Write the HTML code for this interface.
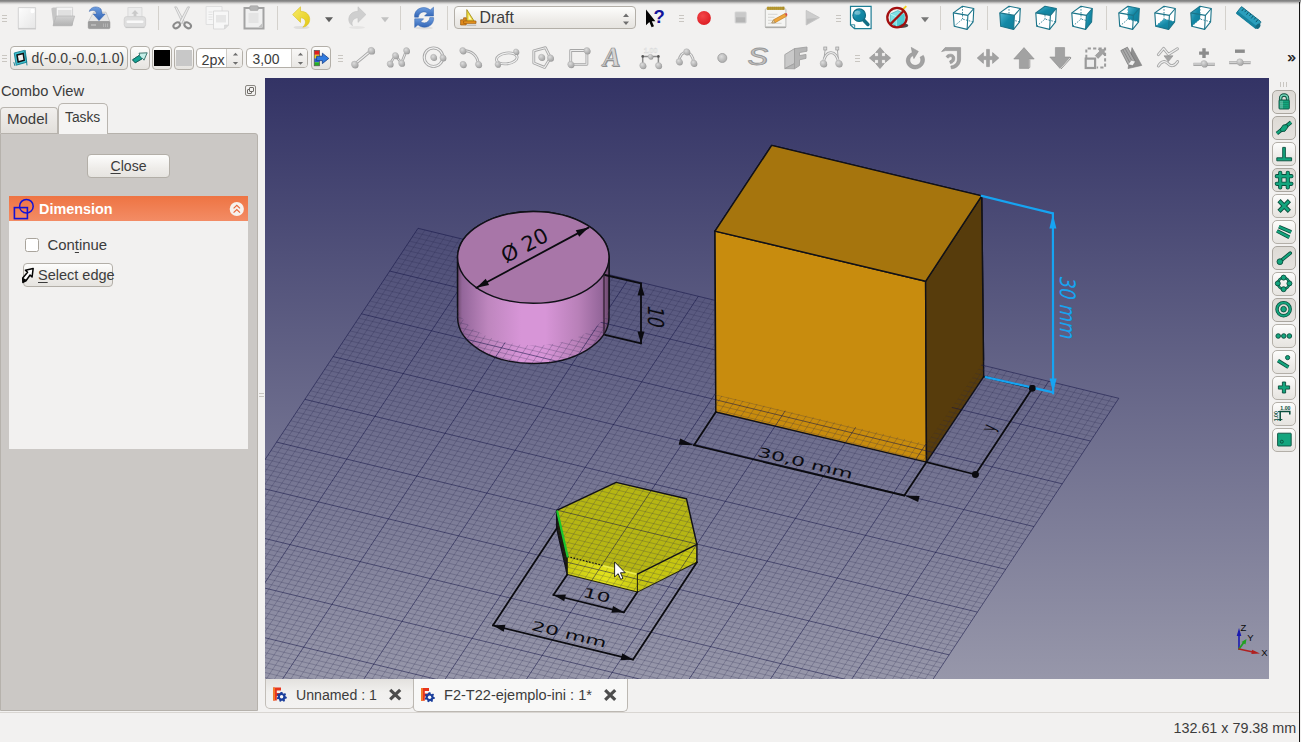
<!DOCTYPE html>
<html><head><meta charset="utf-8"><title>FreeCAD</title>
<style>
html,body{margin:0;padding:0}
body{width:1301px;height:742px;position:relative;overflow:hidden;background:#f2f1f0;font-family:"Liberation Sans",sans-serif;color:#3c3c3c;font-size:14.5px;line-height:1}
.a{position:absolute}
.t{position:absolute;white-space:pre;line-height:1}
svg{position:absolute;overflow:visible}

.sep{position:absolute;width:1px;background:#d4d1cc;top:6px;height:24px}
.hdl{position:absolute;width:5px;height:1px;background:#c9c6c1;box-shadow:0 3px 0 #c9c6c1,0 6px 0 #c9c6c1}
.btn{position:absolute;box-sizing:border-box;border:1px solid #b3afa8;border-radius:4px;background:linear-gradient(#fdfdfc,#eeece9 60%,#e6e4e0)}
.btn.chk{background:linear-gradient(#dddad5,#e6e3df);border-color:#aaa69f}
.spin{position:absolute;box-sizing:border-box;border:1px solid #b3afa8;border-radius:4px;background:#fff;overflow:hidden}
.spin i{position:absolute;right:0;top:0;bottom:0;width:15px;background:linear-gradient(#f8f7f6,#e9e7e4);border-left:1px solid #cfccc7}
.u{text-decoration:underline;text-underline-offset:2px;text-decoration-thickness:1px}

</style></head><body>
<div class="a" style="left:0;top:0;width:1301px;height:5px;background:linear-gradient(#7e7e7e,#8a8a8a 25%,#c4c3c2 55%,#e6e5e4 80%,#f2f1f0)"></div>
<div class="a" style="left:1298.7px;top:2px;width:1.4px;height:740px;background:#141414"></div>
<div class="sep" style="left:158px"></div>
<div class="sep" style="left:277px"></div>
<div class="sep" style="left:400px"></div>
<div class="sep" style="left:447px"></div>
<div class="sep" style="left:940px"></div>
<div class="sep" style="left:987px"></div>
<div class="sep" style="left:1106px"></div>
<div class="sep" style="left:1225px"></div>
<div class="hdl" style="left:2px;top:15px"></div>
<div class="hdl" style="left:679px;top:15px"></div>
<div class="hdl" style="left:836px;top:15px"></div>
<div class="hdl" style="left:2px;top:55px"></div>
<div class="hdl" style="left:338px;top:55px"></div>
<div class="hdl" style="left:854.5px;top:55px"></div>
<div class="btn" style="left:454px;top:6px;width:182px;height:23px;border-radius:4px"></div>
<div class="t" style="left:479.5px;top:9.5px;font-size:15.9px">Draft</div>
<div class="btn" style="left:10px;top:46px;width:118px;height:24px"></div>
<div class="t" style="left:31.5px;top:50.5px;font-size:14px">d(-0.0,-0.0,1.0)</div>
<div class="btn" style="left:130px;top:46px;width:20px;height:24px"></div>
<div class="btn" style="left:152px;top:46px;width:20px;height:24px"></div><div class="a" style="left:154px;top:50px;width:16px;height:16px;background:#000"></div>
<div class="btn" style="left:174px;top:46px;width:20px;height:24px"></div><div class="a" style="left:176px;top:50px;width:16px;height:16px;background:#c8c8c8"></div>
<div class="spin" style="left:196px;top:48px;width:47px;height:20px"><i></i></div><div class="t" style="left:201.5px;top:52.8px;font-size:14.3px">2px</div>
<div class="spin" style="left:246px;top:48px;width:62px;height:20px"><i></i></div><div class="t" style="left:252.5px;top:52.8px;font-size:13.9px">3,00</div>
<div class="btn" style="left:311px;top:46px;width:20px;height:24px"></div>
<div class="t" style="left:1287.5px;top:49px;font-size:15px;color:#111;font-weight:normal;-webkit-text-stroke:0.4px #111">»</div>
<div class="t" style="left:1px;top:83.5px;font-size:14.7px">Combo View</div>
<div class="a" style="left:245px;top:85px;width:11px;height:11px;box-sizing:border-box;border:1px solid #8a8782;border-radius:2px"></div><div class="a" style="left:247px;top:89px;width:5px;height:5px;box-sizing:border-box;border:1px solid #6e6b66;border-radius:1px;background:#f2f1f0"></div><div class="a" style="left:249px;top:87px;width:5px;height:5px;box-sizing:border-box;border:1px solid #6e6b66;border-radius:1px;background:#f2f1f0"></div>
<div class="a" style="left:0;top:133px;width:258px;height:578px;box-sizing:border-box;background:#cbc8c5;border:1px solid #b6b2ac;border-radius:0 3px 0 0"></div>
<div class="a" style="left:0;top:107px;width:58px;height:26px;box-sizing:border-box;border:1px solid #b9b5af;border-bottom:none;border-radius:4px 4px 0 0;background:linear-gradient(#f1efed,#e2dfdb)"></div>
<div class="a" style="left:58px;top:103px;width:50px;height:31px;box-sizing:border-box;border:1px solid #b9b5af;border-bottom:none;border-radius:5px 5px 0 0;background:#f5f4f3"></div>
<div class="t" style="left:7px;top:110.5px;font-size:15px">Model</div>
<div class="t" style="left:65px;top:111.2px;font-size:13.8px">Tasks</div>
<div class="btn" style="left:87px;top:154px;width:83px;height:24px"></div>
<div class="t" style="left:110.5px;top:159px;font-size:14.1px"><span class="u">C</span>lose</div>
<div class="a" style="left:9px;top:196px;width:239px;height:253px;background:#f2f1f0"></div>
<div class="a" style="left:9px;top:196px;width:239px;height:25px;background:linear-gradient(#ee7443,#f38c65)"></div>
<div class="t" style="left:39px;top:201.5px;font-size:14.4px;font-weight:bold;color:#fff">Dimension</div>
<div class="a" style="left:25px;top:238px;width:14px;height:14px;box-sizing:border-box;border:1px solid #a9a49c;border-radius:2.5px;background:#fff"></div>
<div class="t" style="left:47.5px;top:238px;font-size:14.9px">Con<span class="u">t</span>inue</div>
<div class="btn" style="left:23px;top:263px;width:90px;height:24px"></div>
<div class="t" style="left:38px;top:267.5px;font-size:14.5px"><span class="u">S</span>elect edge</div>
<div class="a" style="left:259px;top:393px;width:5px;height:1px;background:#c9c6c1;box-shadow:0 3px 0 #c9c6c1"></div>
<div class="a" style="left:1280px;top:82px;width:1px;height:5px;background:#c9c6c1;box-shadow:3px 0 0 #c9c6c1,6px 0 0 #c9c6c1"></div>
<div class="btn chk" style="left:1272px;top:90px;width:24px;height:24px;border-radius:5px"></div>
<div class="btn chk" style="left:1272px;top:116px;width:24px;height:24px;border-radius:5px"></div>
<div class="btn" style="left:1272px;top:142px;width:24px;height:24px;border-radius:5px"></div>
<div class="btn chk" style="left:1272px;top:168px;width:24px;height:24px;border-radius:5px"></div>
<div class="btn" style="left:1272px;top:194px;width:24px;height:24px;border-radius:5px"></div>
<div class="btn" style="left:1272px;top:220px;width:24px;height:24px;border-radius:5px"></div>
<div class="btn chk" style="left:1272px;top:246px;width:24px;height:24px;border-radius:5px"></div>
<div class="btn" style="left:1272px;top:272px;width:24px;height:24px;border-radius:5px"></div>
<div class="btn chk" style="left:1272px;top:298px;width:24px;height:24px;border-radius:5px"></div>
<div class="btn" style="left:1272px;top:324px;width:24px;height:24px;border-radius:5px"></div>
<div class="btn" style="left:1272px;top:350px;width:24px;height:24px;border-radius:5px"></div>
<div class="btn" style="left:1272px;top:376px;width:24px;height:24px;border-radius:5px"></div>
<div class="btn" style="left:1272px;top:402px;width:24px;height:24px;border-radius:5px"></div>
<div class="btn" style="left:1272px;top:428px;width:24px;height:24px;border-radius:5px"></div>
<div class="a" style="left:265px;top:679px;width:149px;height:30px;box-sizing:border-box;border:1px solid #c2beb8;border-top:none;border-radius:0 0 5px 5px;background:linear-gradient(#e3e1de,#f1f0ee 45%,#f3f2f1)"></div>
<div class="a" style="left:413px;top:679px;width:215px;height:33px;box-sizing:border-box;border:1px solid #bcb8b2;border-top:none;border-radius:0 0 5px 5px;background:#f8f8f7"></div>
<div class="t" style="left:296px;top:687.8px;font-size:14.15px">Unnamed : 1</div>
<div class="t" style="left:444px;top:688px;font-size:14.55px">F2-T22-ejemplo-ini : 1*</div>
<div class="a" style="left:0;top:712px;width:1299px;height:1px;background:#d9d6d2"></div>
<div class="t" style="left:1173.5px;top:721px;font-size:14.33px">132.61 x 79.38 mm</div>
<svg id="scene" class="a" style="left:0;top:0" width="1301" height="742" viewBox="0 0 1301 742">
<defs>
<linearGradient id="bg" x1="0" y1="0" x2="0" y2="1"><stop offset="0" stop-color="#333365"/><stop offset="1" stop-color="#9797aa"/></linearGradient>
<clipPath id="vp"><rect x="265" y="78" width="1004" height="601"/></clipPath>
<linearGradient id="cyl" x1="0" y1="0" x2="1" y2="0">
<stop offset="0" stop-color="#6e4a6e"/><stop offset="0.03" stop-color="#93669a"/><stop offset="0.2" stop-color="#be86be"/>
<stop offset="0.42" stop-color="#d795d7"/><stop offset="0.58" stop-color="#d795d7"/><stop offset="0.8" stop-color="#b880b8"/>
<stop offset="0.95" stop-color="#94669a"/><stop offset="1" stop-color="#6a466a"/></linearGradient>
<linearGradient id="hexf" x1="0" y1="0" x2="1" y2="0">
<stop offset="0" stop-color="#c9c914"/><stop offset="0.55" stop-color="#e2e21c"/><stop offset="1" stop-color="#cdcd14"/></linearGradient>

</defs>
<g clip-path="url(#vp)">
<rect x="265" y="78" width="1004" height="601" fill="url(#bg)"/>
<polygon points="715,231.1 925.6,281.3 926.5,462.1 715.8,412" fill="#c88c0e" stroke="#111118" stroke-width="1.45" stroke-linejoin="round" stroke-linecap="round"/><polygon points="925.6,281.3 981.7,195.9 983.7,376.6 926.5,462.1" fill="#573c0c" stroke="#111118" stroke-width="1.45" stroke-linejoin="round" stroke-linecap="round"/><polygon points="771.7,145.4 981.7,195.9 925.6,281.3 715,231.1" fill="#a6750d" stroke="#111118" stroke-width="1.45" stroke-linejoin="round" stroke-linecap="round"/>
<path d="M457.6,257.3 L457.6,317.6 A75.7,45.9 0 0 0 609,317.6 L609,257.3 Z" fill="url(#cyl)" stroke="#111118" stroke-width="1.45" stroke-linejoin="round" stroke-linecap="round"/><line x1="604" y1="275.5" x2="604" y2="334" stroke="#2a1a2a" stroke-width="1.2"/><ellipse cx="533.3" cy="257.3" rx="75.7" ry="45.9" fill="#a876a8" stroke="#111118" stroke-width="1.45" stroke-linejoin="round" stroke-linecap="round"/>
<polygon points="556.7,510.4 567.3,556.5 567.3,574.5 556.7,528.4" fill="#1e1e0c" stroke="#111118" stroke-width="1.45" stroke-linejoin="round" stroke-linecap="round"/><polygon points="567.3,556.5 637.4,574.1 637.4,592.1 567.3,574.5" fill="url(#hexf)"/><polygon points="637.4,574.1 696.9,544.3 696.9,562.3 637.4,592.1" fill="#c6c612"/><polygon points="556.7,510.4 616.1,482.4 686.5,498.8 696.9,544.3 637.4,574.1 567.3,556.5" fill="#b6b614"/>
<g><path d="M425.01,230 L142.21,657.6M415.17,232.58 L1115.97,402.58M432.02,231.7 L149.22,659.3M412.34,236.85 L1113.14,406.85M439.02,233.4 L156.22,661M409.52,241.13 L1110.32,411.13M446.03,235.1 L163.23,662.7M406.69,245.4 L1107.49,415.4M453.04,236.8 L170.24,664.4M403.86,249.68 L1104.66,419.68M460.05,238.5 L177.25,666.1M401.03,253.96 L1101.83,423.96M467.06,240.2 L184.26,667.8M398.2,258.23 L1099,428.23M474.06,241.9 L191.26,669.5M395.38,262.51 L1096.18,432.51M481.07,243.6 L198.27,671.2M392.55,266.78 L1093.35,436.78M495.09,247 L212.29,674.6M386.89,275.34 L1087.69,445.34M502.1,248.7 L219.3,676.3M384.06,279.61 L1084.86,449.61M509.1,250.4 L226.3,678M381.24,283.89 L1082.04,453.89M516.11,252.1 L233.31,679.7M378.41,288.16 L1079.21,458.16M523.12,253.8 L240.32,681.4M375.58,292.44 L1076.38,462.44M530.13,255.5 L247.33,683.1M372.75,296.72 L1073.55,466.72M537.14,257.2 L254.34,684.8M369.92,300.99 L1070.72,470.99M544.14,258.9 L261.34,686.5M367.1,305.27 L1067.9,475.27M551.15,260.6 L268.35,688.2M364.27,309.54 L1065.07,479.54M565.17,264 L282.37,691.6M358.61,318.1 L1059.41,488.1M572.18,265.7 L289.38,693.3M355.78,322.37 L1056.58,492.37M579.18,267.4 L296.38,695M352.96,326.65 L1053.76,496.65M586.19,269.1 L303.39,696.7M350.13,330.92 L1050.93,500.92M593.2,270.8 L310.4,698.4M347.3,335.2 L1048.1,505.2M600.21,272.5 L317.41,700.1M344.47,339.48 L1045.27,509.48M607.22,274.2 L324.42,701.8M341.64,343.75 L1042.44,513.75M614.22,275.9 L331.42,703.5M338.82,348.03 L1039.62,518.03M621.23,277.6 L338.43,705.2M335.99,352.3 L1036.79,522.3M635.25,281 L352.45,708.6M330.33,360.86 L1031.13,530.86M642.26,282.7 L359.46,710.3M327.5,365.13 L1028.3,535.13M649.26,284.4 L366.46,712M324.68,369.41 L1025.48,539.41M656.27,286.1 L373.47,713.7M321.85,373.68 L1022.65,543.68M663.28,287.8 L380.48,715.4M319.02,377.96 L1019.82,547.96M670.29,289.5 L387.49,717.1M316.19,382.24 L1016.99,552.24M677.3,291.2 L394.5,718.8M313.36,386.51 L1014.16,556.51M684.3,292.9 L401.5,720.5M310.54,390.79 L1011.34,560.79M691.31,294.6 L408.51,722.2M307.71,395.06 L1008.51,565.06M705.33,298 L422.53,725.6M302.05,403.62 L1002.85,573.62M712.34,299.7 L429.54,727.3M299.22,407.89 L1000.02,577.89M719.34,301.4 L436.54,729M296.4,412.17 L997.2,582.17M726.35,303.1 L443.55,730.7M293.57,416.44 L994.37,586.44M733.36,304.8 L450.56,732.4M290.74,420.72 L991.54,590.72M740.37,306.5 L457.57,734.1M287.91,425 L988.71,595M747.38,308.2 L464.58,735.8M285.08,429.27 L985.88,599.27M754.38,309.9 L471.58,737.5M282.26,433.55 L983.06,603.55M761.39,311.6 L478.59,739.2M279.43,437.82 L980.23,607.82M775.41,315 L492.61,742.6M273.77,446.38 L974.57,616.38M782.42,316.7 L499.62,744.3M270.94,450.65 L971.74,620.65M789.42,318.4 L506.62,746M268.12,454.93 L968.92,624.93M796.43,320.1 L513.63,747.7M265.29,459.2 L966.09,629.2M803.44,321.8 L520.64,749.4M262.46,463.48 L963.26,633.48M810.45,323.5 L527.65,751.1M259.63,467.76 L960.43,637.76M817.46,325.2 L534.66,752.8M256.8,472.03 L957.6,642.03M824.46,326.9 L541.66,754.5M253.98,476.31 L954.78,646.31M831.47,328.6 L548.67,756.2M251.15,480.58 L951.95,650.58M845.49,332 L562.69,759.6M245.49,489.14 L946.29,659.14M852.5,333.7 L569.7,761.3M242.66,493.41 L943.46,663.41M859.5,335.4 L576.7,763M239.84,497.69 L940.64,667.69M866.51,337.1 L583.71,764.7M237.01,501.96 L937.81,671.96M873.52,338.8 L590.72,766.4M234.18,506.24 L934.98,676.24M880.53,340.5 L597.73,768.1M231.35,510.52 L932.15,680.52M887.54,342.2 L604.74,769.8M228.52,514.79 L929.32,684.79M894.54,343.9 L611.74,771.5M225.7,519.07 L926.5,689.07M901.55,345.6 L618.75,773.2M222.87,523.34 L923.67,693.34M915.57,349 L632.77,776.6M217.21,531.9 L918.01,701.9M922.58,350.7 L639.78,778.3M214.38,536.17 L915.18,706.17M929.58,352.4 L646.78,780M211.56,540.45 L912.36,710.45M936.59,354.1 L653.79,781.7M208.73,544.72 L909.53,714.72M943.6,355.8 L660.8,783.4M205.9,549 L906.7,719M950.61,357.5 L667.81,785.1M203.07,553.28 L903.87,723.28M957.62,359.2 L674.82,786.8M200.24,557.55 L901.04,727.55M964.62,360.9 L681.82,788.5M197.42,561.83 L898.22,731.83M971.63,362.6 L688.83,790.2M194.59,566.1 L895.39,736.1M985.65,366 L702.85,793.6M188.93,574.66 L889.73,744.66M992.66,367.7 L709.86,795.3M186.1,578.93 L886.9,748.93M999.66,369.4 L716.86,797M183.28,583.21 L884.08,753.21M1006.67,371.1 L723.87,798.7M180.45,587.48 L881.25,757.48M1013.68,372.8 L730.88,800.4M177.62,591.76 L878.42,761.76M1020.69,374.5 L737.89,802.1M174.79,596.04 L875.59,766.04M1027.7,376.2 L744.9,803.8M171.96,600.31 L872.76,770.31M1034.7,377.9 L751.9,805.5M169.14,604.59 L869.94,774.59M1041.71,379.6 L758.91,807.2M166.31,608.86 L867.11,778.86M1055.73,383 L772.93,810.6M160.65,617.42 L861.45,787.42M1062.74,384.7 L779.94,812.3M157.82,621.69 L858.62,791.69M1069.74,386.4 L786.94,814M155,625.97 L855.8,795.97M1076.75,388.1 L793.95,815.7M152.17,630.24 L852.97,800.24M1083.76,389.8 L800.96,817.4M149.34,634.52 L850.14,804.52M1090.77,391.5 L807.97,819.1M146.51,638.8 L847.31,808.8M1097.78,393.2 L814.98,820.8M143.68,643.07 L844.48,813.07M1104.78,394.9 L821.98,822.5M140.86,647.35 L841.66,817.35M1111.79,396.6 L828.99,824.2M138.03,651.62 L838.83,821.62" stroke="#24244c" stroke-opacity="0.27" stroke-width="0.9" fill="none"/><path d="M418,228.3 L135.2,655.9M418,228.3 L1118.8,398.3M488.08,245.3 L205.28,672.9M389.72,271.06 L1090.52,441.06M558.16,262.3 L275.36,689.9M361.44,313.82 L1062.24,483.82M628.24,279.3 L345.44,706.9M333.16,356.58 L1033.96,526.58M698.32,296.3 L415.52,723.9M304.88,399.34 L1005.68,569.34M768.4,313.3 L485.6,740.9M276.6,442.1 L977.4,612.1M838.48,330.3 L555.68,757.9M248.32,484.86 L949.12,654.86M908.56,347.3 L625.76,774.9M220.04,527.62 L920.84,697.62M978.64,364.3 L695.84,791.9M191.76,570.38 L892.56,740.38M1048.72,381.3 L765.92,808.9M163.48,613.14 L864.28,783.14M1118.8,398.3 L836,825.9M135.2,655.9 L836,825.9" stroke="#141446" stroke-opacity="0.55" stroke-width="1" fill="none"/></g>
<clipPath id="cubeA"><polygon points="769.7,143.4 983.7,193.9 985.7,358.6 926.5,444.1 713.8,394 713,231.1"/></clipPath><g clip-path="url(#cubeA)"><polygon points="715,231.1 925.6,281.3 926.5,462.1 715.8,412" fill="#c88c0e" stroke="#111118" stroke-width="1.45" stroke-linejoin="round" stroke-linecap="round"/><polygon points="925.6,281.3 981.7,195.9 983.7,376.6 926.5,462.1" fill="#573c0c" stroke="#111118" stroke-width="1.45" stroke-linejoin="round" stroke-linecap="round"/><polygon points="771.7,145.4 981.7,195.9 925.6,281.3 715,231.1" fill="#a6750d" stroke="#111118" stroke-width="1.45" stroke-linejoin="round" stroke-linecap="round"/></g>
<clipPath id="cylA"><path d="M455.6,257.3 A77.7,47.9 0 0 1 611,257.3 L611,299.6 A77.7,45.9 0 0 1 455.6,299.6 Z"/></clipPath><g clip-path="url(#cylA)"><path d="M457.6,257.3 L457.6,317.6 A75.7,45.9 0 0 0 609,317.6 L609,257.3 Z" fill="url(#cyl)" stroke="#111118" stroke-width="1.45" stroke-linejoin="round" stroke-linecap="round"/><line x1="604" y1="275.5" x2="604" y2="334" stroke="#2a1a2a" stroke-width="1.2"/><ellipse cx="533.3" cy="257.3" rx="75.7" ry="45.9" fill="#a876a8" stroke="#111118" stroke-width="1.45" stroke-linejoin="round" stroke-linecap="round"/></g>
<line x1="602.35" y1="565.6" x2="637.4" y2="574.4" stroke="#ecec4a" stroke-width="1.6"/>
<line x1="567.3" y1="556.5" x2="602.35" y2="565.3" stroke="#15150a" stroke-width="1.2" stroke-dasharray="1.6,1.6"/>
<polyline points="637.4,574.1 696.9,544.3" fill="none" stroke="#111118" stroke-width="1.45" stroke-linejoin="round" stroke-linecap="round"/><line x1="637.4" y1="574.1" x2="637.4" y2="592.1" stroke="#24240c" stroke-width="1.05" stroke-linecap="round" stroke-linejoin="round"/>
<polyline points="696.9,562.3 637.4,592.1 567.3,574.5" fill="none" stroke="#24240c" stroke-width="1.05" stroke-linecap="round" stroke-linejoin="round"/>
<polyline points="567.3,574.5 567.3,556.5" fill="none" stroke="#24240c" stroke-width="1.05" stroke-linecap="round" stroke-linejoin="round"/>
<polyline points="556.7,528.4 556.7,510.4 616.1,482.4 686.5,498.8 696.9,544.3 696.9,562.3" fill="none" stroke="#111118" stroke-width="1.45" stroke-linejoin="round" stroke-linecap="round"/>
<line x1="557.3" y1="511.4" x2="567.6" y2="556.5" stroke="#1dc52c" stroke-width="2.2" stroke-linecap="round"/>
<line x1="715.8" y1="412" x2="694" y2="445.2" stroke="#0b0b10" stroke-width="1.8" stroke-linecap="round" fill="none"/>
<line x1="926.5" y1="462.1" x2="904.3" y2="495.5" stroke="#0b0b10" stroke-width="1.8" stroke-linecap="round" fill="none"/>
<line x1="694" y1="445.2" x2="904.3" y2="495.5" stroke="#0b0b10" stroke-width="1.8" stroke-linecap="round" fill="none"/>
<polygon points="694,445.2 678.67,444.82 680.16,438.6" fill="#0b0b10"/>
<polygon points="904.3,495.5 919.63,495.88 918.14,502.1" fill="#0b0b10"/>
<line x1="926.5" y1="462.1" x2="975.4" y2="474.5" stroke="#0b0b10" stroke-width="1.8" stroke-linecap="round" fill="none"/>
<line x1="975.4" y1="474.5" x2="1032.3" y2="388.3" stroke="#0b0b10" stroke-width="1.8" stroke-linecap="round" fill="none"/>
<line x1="983.7" y1="376.6" x2="1032.3" y2="388.3" stroke="#0b0b10" stroke-width="1.8" stroke-linecap="round" fill="none"/>
<circle cx="975.4" cy="474.5" r="3.3" fill="#0b0b10"/><circle cx="1032.3" cy="388.3" r="3.3" fill="#0b0b10"/>
<line x1="981.7" y1="195.9" x2="1052.9" y2="213.4" stroke="#16a4f2" stroke-width="2.2" stroke-linecap="round" fill="none"/>
<line x1="1052.9" y1="213.4" x2="1053.1" y2="393.4" stroke="#16a4f2" stroke-width="2.2" stroke-linecap="round" fill="none"/>
<line x1="985.7" y1="377.1" x2="1053.1" y2="392.4" stroke="#16a4f2" stroke-width="2.2" stroke-linecap="round" fill="none"/>
<polygon points="1052.9,214.4 1056.4,228.4 1049.4,228.4" fill="#16a4f2"/>
<polygon points="1053.1,392.4 1049.6,378.4 1056.6,378.4" fill="#16a4f2"/>
<line x1="476.4" y1="287.8" x2="588.5" y2="227.6" stroke="#0b0b10" stroke-width="1.8" stroke-linecap="round" fill="none"/>
<polygon points="476.4,287.8 485.71,278.71 489.12,285.06" fill="#0b0b10"/>
<polygon points="588.5,227.6 579.19,236.69 575.78,230.34" fill="#0b0b10"/>
<line x1="605" y1="275" x2="641" y2="283.4" stroke="#0b0b10" stroke-width="1.8" stroke-linecap="round" fill="none"/>
<line x1="605" y1="334.9" x2="641" y2="343.4" stroke="#0b0b10" stroke-width="1.8" stroke-linecap="round" fill="none"/>
<line x1="641" y1="283.4" x2="641" y2="343.4" stroke="#0b0b10" stroke-width="1.8" stroke-linecap="round" fill="none"/>
<polygon points="641,283.4 644.5,295.4 637.5,295.4" fill="#0b0b10"/>
<polygon points="641,343.4 637.5,331.4 644.5,331.4" fill="#0b0b10"/>
<line x1="567.3" y1="574.5" x2="553.4" y2="595" stroke="#0b0b10" stroke-width="1.8" stroke-linecap="round" fill="none"/>
<line x1="637.4" y1="592.1" x2="623.9" y2="612.3" stroke="#0b0b10" stroke-width="1.8" stroke-linecap="round" fill="none"/>
<line x1="553.4" y1="595" x2="623.9" y2="612.3" stroke="#0b0b10" stroke-width="1.8" stroke-linecap="round" fill="none"/>
<polygon points="553.4,595 565.89,594.46 564.22,601.26" fill="#0b0b10"/>
<polygon points="623.9,612.3 611.41,612.84 613.08,606.04" fill="#0b0b10"/>
<line x1="556.7" y1="528.4" x2="492.9" y2="625.4" stroke="#0b0b10" stroke-width="1.8" stroke-linecap="round" fill="none"/>
<line x1="696.9" y1="562.3" x2="633.1" y2="659.6" stroke="#0b0b10" stroke-width="1.8" stroke-linecap="round" fill="none"/>
<line x1="492.9" y1="625.4" x2="633.1" y2="659.6" stroke="#0b0b10" stroke-width="1.8" stroke-linecap="round" fill="none"/>
<polygon points="492.9,625.4 505.39,624.86 503.72,631.66" fill="#0b0b10"/>
<polygon points="633.1,659.6 620.61,660.14 622.28,653.34" fill="#0b0b10"/>
<text transform="matrix(2.11,0.51,-0.38,1.28,756.5,456)" text-anchor="start" font-family="DejaVu Sans, sans-serif" font-size="10.0" fill="#0b0b10" >30,0 mm</text>
<text transform="matrix(2.11,0.51,-0.38,1.28,530.5,629.8)" text-anchor="start" font-family="DejaVu Sans, sans-serif" font-size="10.0" fill="#0b0b10" >20 mm</text>
<text transform="matrix(2.11,0.51,-0.38,1.28,582,596.6)" text-anchor="start" font-family="DejaVu Sans, sans-serif" font-size="10.0" fill="#0b0b10" >10</text>
<text transform="matrix(1.85,-0.99,0.99,1.85,506,263.6)" text-anchor="start" font-family="DejaVu Sans, sans-serif" font-size="10.0" fill="#0b0b10" >Ø 20</text>
<text transform="matrix(0,1.66,-2.19,-0.53,648.2,304.5)" text-anchor="start" font-family="DejaVu Sans, sans-serif" font-size="10.0" fill="#0b0b10" >10</text>
<text transform="matrix(0,1.77,-2.14,-0.52,1059.5,275.2)" text-anchor="start" font-family="DejaVu Sans, sans-serif" font-size="10.0" fill="#16a4f2" >30 mm</text>
<text transform="matrix(0.4,-0.99,1.87,0.43,994.1,432.2)" text-anchor="start" font-family="DejaVu Sans, sans-serif" font-size="10.0" fill="#0b0b10" >y</text>
<circle cx="975.4" cy="474.5" r="3.3" fill="#0b0b10"/><circle cx="1032.3" cy="388.3" r="3.3" fill="#0b0b10"/>
<g stroke-linecap="round"><line x1="1239" y1="649" x2="1239" y2="633" stroke="#1a1ab0" stroke-width="1.6"/><polygon points="1239,628 1236.7,636 1241.3,636" fill="#1a1ab0"/><line x1="1239" y1="649" x2="1244.5" y2="641.5" stroke="#22a022" stroke-width="1.8"/><polygon points="1246.5,639 1241.5,642 1245.5,644.5" fill="#22a022"/><line x1="1239" y1="649" x2="1254" y2="652.3" stroke="#b02020" stroke-width="1.6"/><polygon points="1260,653.5 1252,649.8 1251.4,654" fill="#b02020"/></g>
<text x="1243.5" y="630.5" font-family="Liberation Sans, sans-serif" font-size="9.5" fill="#0a0a0a" text-anchor="middle">Z</text>
<text x="1250.5" y="640.5" font-family="Liberation Sans, sans-serif" font-size="9.5" fill="#0a0a0a" text-anchor="middle">Y</text>
<text x="1264.5" y="655.5" font-family="Liberation Sans, sans-serif" font-size="9.5" fill="#0a0a0a" text-anchor="middle">X</text>
<path transform="translate(614.6,561.9) scale(0.89)" d="M0,0 L0,17 L4,13.2 L6.8,19.6 L9.4,18.5 L6.6,12.2 L12,12.2 Z" fill="#fff" stroke="#111" stroke-width="1"/>
</g>
</svg>
<svg class="a" style="left:0;top:0;pointer-events:none" width="1301" height="742" viewBox="0 0 1301 742"><defs>
<linearGradient id="gPaper" x1="0" y1="0" x2="1" y2="1"><stop offset="0" stop-color="#fdfdfd"/><stop offset="1" stop-color="#e6e6e6"/></linearGradient>
<linearGradient id="gGrey" x1="0" y1="0" x2="0" y2="1"><stop offset="0" stop-color="#d2d2d2"/><stop offset="1" stop-color="#b2b2b2"/></linearGradient>
<linearGradient id="gGreyD" x1="0" y1="0" x2="0" y2="1"><stop offset="0" stop-color="#b9b9b9"/><stop offset="1" stop-color="#989898"/></linearGradient>
<linearGradient id="gBlue" x1="0" y1="0" x2="0" y2="1"><stop offset="0" stop-color="#6f9fe0"/><stop offset="1" stop-color="#2f62b4"/></linearGradient>
<linearGradient id="gYel" x1="0" y1="0" x2="1" y2="1"><stop offset="0" stop-color="#f8ec6a"/><stop offset="1" stop-color="#e3c811"/></linearGradient>
<linearGradient id="gTeal" x1="0" y1="0" x2="1" y2="1"><stop offset="0" stop-color="#4fb7d2"/><stop offset="0.5" stop-color="#1489a6"/><stop offset="1" stop-color="#0f7d99"/></linearGradient>
<radialGradient id="gRed" cx="0.4" cy="0.35" r="0.7"><stop offset="0" stop-color="#f4474a"/><stop offset="1" stop-color="#dc1c22"/></radialGradient>
<radialGradient id="gBall" cx="0.4" cy="0.35" r="0.7"><stop offset="0" stop-color="#dcdcdc"/><stop offset="1" stop-color="#a9a9a9"/></radialGradient>
<linearGradient id="gSnap" x1="0" y1="0" x2="0" y2="1"><stop offset="0" stop-color="#1fb58c"/><stop offset="1" stop-color="#0f9a74"/></linearGradient>
</defs>
<g transform="translate(12,5)"><path d="M6.3,2.6 H23.6 V23.4 H6.3 Z" fill="url(#gPaper)" stroke="#d3d3d3" stroke-width="1"/><path d="M6,23.9 H24" stroke="#c4c4c4" stroke-width="1"/><circle cx="20.5" cy="6" r="2.2" fill="#fff"/></g>
<g transform="translate(48,5)"><path d="M3.3,3.5 L5,2.5 L10,2.5 L11,4 L25,4 L25,20.5 L5.5,20.5 Z" fill="#c6c6c6"/><path d="M8.5,2.3 H24.6 V17 H8.5 Z" fill="#f4f4f4" stroke="#cfcfcf" stroke-width="0.7"/><path d="M10,5 H23.5 V12 H10 Z" fill="#e0e0e0"/><path d="M8.2,11 H26.7 L23.8,20.8 H5 Z" fill="url(#gGrey)" stroke="#b0b0b0" stroke-width="0.6"/></g>
<g transform="translate(88,5)"><path d="M5.6,7.2 H18 L21.9,16.8 H0.3 Z" fill="#e6e6e6" stroke="#bdbdbd" stroke-width="0.7"/><rect x="0.3" y="16.6" width="21.6" height="7" rx="1" fill="#9b9b9b" stroke="#8a8a8a" stroke-width="0.6"/><path d="M3,20 H8" stroke="#c8c8c8" stroke-width="1.2"/><path d="M15.5,18.5V22M17.5,18.5V22M19.5,18.5V22" stroke="#b5b5b5" stroke-width="0.9"/><path d="M1.3,6.4 C2.5,1.5 9.5,0.5 13,4 L14.2,9 L17.2,9 L11,15.6 L5.2,9 L8.6,9 C8.3,5.5 5,4.3 1.3,6.4 Z" fill="url(#gBlue)" stroke="#2c5aa8" stroke-width="0.5"/></g>
<g transform="translate(123,5)"><path d="M4.9,2.5 H19 V13 H4.9 Z" fill="#ececec" stroke="#d2d2d2" stroke-width="0.7"/><path d="M12,5 L15.5,8.8 H13.4 V11.5 H10.6 V8.8 H8.5 Z" fill="#c9c9c9"/><rect x="1.2" y="11.6" width="21.4" height="10.6" rx="2.5" fill="#dedede" stroke="#cdcdcd" stroke-width="0.7"/><rect x="3.5" y="15.4" width="17" height="2.6" rx="1.2" fill="#f9f9f9"/><path d="M2.5,22.6H21.5" stroke="#c6c6c6" stroke-width="1"/></g>
<g transform="translate(170,5)"><path d="M4.7,1.9 L6.6,1.9 L14.8,17.5 L12.6,18.5 Z" fill="#ececec" stroke="#b5b5b5" stroke-width="0.7"/><path d="M19.5,1.9 L17.6,1.9 L9.4,17.5 L11.6,18.5 Z" fill="#ececec" stroke="#b5b5b5" stroke-width="0.7"/><ellipse cx="6.7" cy="20.3" rx="3.6" ry="2.5" transform="rotate(-35 6.7 20.3)" fill="none" stroke="#8b8b8b" stroke-width="2"/><ellipse cx="17.7" cy="20.3" rx="3.6" ry="2.5" transform="rotate(35 17.7 20.3)" fill="none" stroke="#8b8b8b" stroke-width="2"/></g>
<g transform="translate(205.5,5)"><path d="M0.6,1.5 H16.5 V19.5 H0.6 Z" fill="#f6f6f6" stroke="#dadada" stroke-width="0.8"/><path d="M3,7H7M3,9.5H7M3,12H7M3,14.5H7" stroke="#e0e0e0" stroke-width="0.8"/><path d="M8,6 H23 V20 L19,24 H8 Z" fill="#f7f7f7" stroke="#d4d4d4" stroke-width="0.8"/><path d="M10.5,10 H20.5 V17.5 H10.5 Z" fill="#e6e6e6"/><path d="M23,20 L19,20 L19,24 Z" fill="#dcdcdc" stroke="#cfcfcf" stroke-width="0.5"/></g>
<g transform="translate(241.5,5)"><rect x="3" y="3" width="19" height="20.5" fill="#f0f0f0" stroke="#a3a3a3" stroke-width="2"/><rect x="8.3" y="0.8" width="8.4" height="4.6" rx="1" fill="#b4b4b4" stroke="#a0a0a0" stroke-width="0.6"/><path d="M7,8 H17 V18 H7 Z" fill="#e4e4e4"/><path d="M20.5,18.5 V22 H17 Z" fill="#c2c2c2"/></g>
<g transform="translate(289,5)"><ellipse cx="12.5" cy="22.5" rx="8" ry="1.6" fill="#000" opacity="0.08"/><path d="M3.6,9.6 L11.5,1.8 L11.5,6.3 C17.5,6.3 21.4,10.5 20.6,15.6 C20,19.6 17,21.8 13.8,22.2 C16.5,19.8 17,16.8 15.8,14.8 C14.8,13.2 13,12.8 11.5,12.8 L11.5,17.4 Z" fill="url(#gYel)" stroke="#d9be20" stroke-width="0.6"/></g>
<g transform="translate(345.5,5)"><ellipse cx="11.5" cy="22.5" rx="8" ry="1.4" fill="#000" opacity="0.05"/><path d="M20.4,9.6 L12.5,1.8 L12.5,6.3 C6.5,6.3 2.6,10.5 3.4,15.6 C3.8,18 5.2,19.8 7,20.6 C5.9,18.5 6.6,15.8 8.2,14.4 C9.4,13.3 11,12.8 12.5,12.8 L12.5,17.4 Z" fill="#cfcfcf" stroke="#c2c2c2" stroke-width="0.6"/></g>
<g transform="translate(412,5)"><ellipse cx="12" cy="23" rx="9" ry="1.5" fill="#000" opacity="0.08"/><path d="M2.6,12.2 C2,6.5 6.5,2.4 12,2.6 C14.6,2.7 16.6,3.6 18.2,5 L21.5,2.2 L21.5,11 L12.6,11 L15.4,8 C14.3,7.2 13.2,6.9 11.9,6.9 C9,6.9 6.6,9 6.4,12.2 Z" fill="url(#gBlue)" stroke="#2f60ad" stroke-width="0.5"/><path d="M21.6,12.6 C22.2,18.3 17.7,22.4 12.2,22.2 C9.6,22.1 7.6,21.2 6,19.8 L2.7,22.6 L2.7,13.8 L11.6,13.8 L8.8,16.8 C9.9,17.6 11,17.9 12.3,17.9 C15.2,17.9 17.6,15.8 17.8,12.6 Z" fill="url(#gBlue)" stroke="#2f60ad" stroke-width="0.5"/></g>
<g transform="translate(643,5)"><path d="M3,4.6 L3,20.2 L6.4,17 L8.6,22.2 L11,21.2 L8.8,16.2 L12.4,16.2 Z" fill="#050505"/><text x="10.6" y="18.2" font-family="Liberation Sans, sans-serif" font-weight="bold" font-size="18.5" fill="#14149a">?</text></g>
<g transform="translate(692,5.5)"><circle cx="12" cy="12.5" r="6.9" fill="url(#gRed)"/></g>
<g transform="translate(728.5,5.3)"><rect x="6.5" y="6.6" width="11.2" height="11.2" rx="0.8" fill="#c9c9c9" stroke="#d6d6d6" stroke-width="0.8"/><rect x="7.5" y="12" width="9.2" height="5" fill="#b5b5b5"/></g>
<g transform="translate(763.5,5.3)"><rect x="1.8" y="3.4" width="20.6" height="19" rx="1" fill="#f5f5f3" stroke="#b9b9b6" stroke-width="0.9"/><path d="M1.8,21.2 H22.4 V22.6 H1.8 Z" fill="#a9a9a6"/><path d="M3.3,1.6 H21 V4.6 H3.3 Z" fill="#c8a93a"/><path d="M4.6,1.2V4.6M6.6,1.2V4.6M8.6,1.2V4.6M10.6,1.2V4.6M12.6,1.2V4.6M14.6,1.2V4.6M16.6,1.2V4.6M18.6,1.2V4.6M20.2,1.2V4.6" stroke="#8e7420" stroke-width="0.7"/><path d="M4.5,9H14M4.5,12H11M4.5,15H9M4.5,18H18" stroke="#d2d2cf" stroke-width="0.9"/><path d="M8.3,17.6 L10,14.5 L21.4,8.3 L23,11 L11.6,17.4 Z" fill="#f0a63c" stroke="#b77716" stroke-width="0.6"/><path d="M21.4,8.3 L23,7.6 L24,9.6 L23,11 Z" fill="#d64a4a"/><path d="M8.3,17.6 L10,14.5 L11.6,17.4 Z" fill="#e8d0a8" stroke="#7a6a4a" stroke-width="0.4"/></g>
<g transform="translate(800,5.2)"><path d="M6.2,5.2 L19.4,12.4 L6.2,19.8 Z" fill="#cdcdcd" stroke="#c0c0c0" stroke-width="0.8"/><path d="M6.8,13.5 L17.5,12.8 L6.8,19 Z" fill="#bcbcbc"/></g>
<g transform="translate(848.5,5)"><path d="M2,1.4 H22.6 V23.6 H6 L2,20 Z" fill="#fff" stroke="#1d7d93" stroke-width="1.2"/><path d="M2.2,19.8 H6.2 V23.4" fill="none" stroke="#1d7d93" stroke-width="0.9"/><path d="M14.6,14.6 L19.4,19.4" stroke="#136d84" stroke-width="3.6" stroke-linecap="round"/><circle cx="10.7" cy="10.2" r="6.3" fill="url(#gTeal)" stroke="#136d84" stroke-width="1.2"/><ellipse cx="9" cy="7.8" rx="3" ry="2" fill="#fff" opacity="0.35"/></g>
<g transform="translate(884.8,5)"><ellipse cx="16" cy="20.5" rx="7.5" ry="2.6" fill="#222" opacity="0.8"/><path d="M5.5,9 L13,5.6 L19.5,8.4 L19.5,17.6 L12,21.4 L5.5,18 Z" fill="#7fe0e4" stroke="#3aa9b2" stroke-width="0.6"/><path d="M5.5,9 L12,11.8 L19.5,8.4 M12,11.8 V21.4" stroke="#c9f6f6" stroke-width="0.8" fill="none"/><path d="M12,11.8 L19.5,8.4 V17.6 L12,21.4 Z" fill="#3fc3cc" opacity="0.75"/><path d="M17,5.5 L21.5,1.2" stroke="#f2d21c" stroke-width="1.8"/><circle cx="12.2" cy="12.6" r="9.7" fill="none" stroke="#a30f0f" stroke-width="2.3"/><path d="M5.4,19.4 L19,5.8" stroke="#a30f0f" stroke-width="2.3"/></g>
<g transform="translate(952,5)"><polygon points="1.3,7.9 10.5,1.2 21.8,3.5 21.1,16.8 15.1,24.4 2.2,21.2" fill="#fff"/><path d="M10.5,1.2 L10.5,14.1 M2.2,21.2 L10.5,14.1 L21.1,16.8" stroke="#2a7d92" stroke-width="0.9" stroke-dasharray="1.6,1.3" fill="none"/><polygon points="1.3,7.9 10.5,1.2 21.8,3.5 21.1,16.8 15.1,24.4 2.2,21.2" fill="none" stroke="#1b7489" stroke-width="1.1" stroke-linejoin="round"/><path d="M1.3,7.9 L15.9,10.4 L21.8,3.5 M15.9,10.4 L15.1,24.4" stroke="#1b7489" stroke-width="1.1" fill="none" stroke-linejoin="round"/></g>
<g transform="translate(998.5,5)"><polygon points="1.3,7.9 10.5,1.2 21.8,3.5 21.1,16.8 15.1,24.4 2.2,21.2" fill="#fff"/><path d="M10.5,1.2 L10.5,14.1 M2.2,21.2 L10.5,14.1 L21.1,16.8" stroke="#2a7d92" stroke-width="0.9" stroke-dasharray="1.6,1.3" fill="none"/><polygon points="1.3,7.9 15.9,10.4 15.1,24.4 2.2,21.2" fill="url(#gTeal)"/><polygon points="1.3,7.9 10.5,1.2 21.8,3.5 21.1,16.8 15.1,24.4 2.2,21.2" fill="none" stroke="#1b7489" stroke-width="1.1" stroke-linejoin="round"/><path d="M1.3,7.9 L15.9,10.4 L21.8,3.5 M15.9,10.4 L15.1,24.4" stroke="#1b7489" stroke-width="1.1" fill="none" stroke-linejoin="round"/></g>
<g transform="translate(1034.5,5)"><polygon points="1.3,7.9 10.5,1.2 21.8,3.5 21.1,16.8 15.1,24.4 2.2,21.2" fill="#fff"/><path d="M10.5,1.2 L10.5,14.1 M2.2,21.2 L10.5,14.1 L21.1,16.8" stroke="#2a7d92" stroke-width="0.9" stroke-dasharray="1.6,1.3" fill="none"/><polygon points="1.3,7.9 10.5,1.2 21.8,3.5 15.9,10.4" fill="url(#gTeal)"/><polygon points="1.3,7.9 10.5,1.2 21.8,3.5 21.1,16.8 15.1,24.4 2.2,21.2" fill="none" stroke="#1b7489" stroke-width="1.1" stroke-linejoin="round"/><path d="M1.3,7.9 L15.9,10.4 L21.8,3.5 M15.9,10.4 L15.1,24.4" stroke="#1b7489" stroke-width="1.1" fill="none" stroke-linejoin="round"/></g>
<g transform="translate(1070.5,5)"><polygon points="1.3,7.9 10.5,1.2 21.8,3.5 21.1,16.8 15.1,24.4 2.2,21.2" fill="#fff"/><path d="M10.5,1.2 L10.5,14.1 M2.2,21.2 L10.5,14.1 L21.1,16.8" stroke="#2a7d92" stroke-width="0.9" stroke-dasharray="1.6,1.3" fill="none"/><polygon points="15.9,10.4 21.8,3.5 21.1,16.8 15.1,24.4" fill="url(#gTeal)"/><polygon points="1.3,7.9 10.5,1.2 21.8,3.5 21.1,16.8 15.1,24.4 2.2,21.2" fill="none" stroke="#1b7489" stroke-width="1.1" stroke-linejoin="round"/><path d="M1.3,7.9 L15.9,10.4 L21.8,3.5 M15.9,10.4 L15.1,24.4" stroke="#1b7489" stroke-width="1.1" fill="none" stroke-linejoin="round"/></g>
<g transform="translate(1117.5,5)"><polygon points="1.3,7.9 10.5,1.2 21.8,3.5 21.1,16.8 15.1,24.4 2.2,21.2" fill="#fff"/><path d="M10.5,1.2 L10.5,14.1 M2.2,21.2 L10.5,14.1 L21.1,16.8" stroke="#2a7d92" stroke-width="0.9" stroke-dasharray="1.6,1.3" fill="none"/><polygon points="10.5,1.2 21.8,3.5 21.1,16.8 10.5,14.1" fill="url(#gTeal)"/><polygon points="1.3,7.9 10.5,1.2 21.8,3.5 21.1,16.8 15.1,24.4 2.2,21.2" fill="none" stroke="#1b7489" stroke-width="1.1" stroke-linejoin="round"/><path d="M1.3,7.9 L15.9,10.4 L21.8,3.5 M15.9,10.4 L15.1,24.4" stroke="#1b7489" stroke-width="1.1" fill="none" stroke-linejoin="round"/></g>
<g transform="translate(1153.5,5)"><polygon points="1.3,7.9 10.5,1.2 21.8,3.5 21.1,16.8 15.1,24.4 2.2,21.2" fill="#fff"/><path d="M10.5,1.2 L10.5,14.1 M2.2,21.2 L10.5,14.1 L21.1,16.8" stroke="#2a7d92" stroke-width="0.9" stroke-dasharray="1.6,1.3" fill="none"/><polygon points="2.2,21.2 15.1,24.4 21.1,16.8 10.5,14.1" fill="url(#gTeal)"/><polygon points="1.3,7.9 10.5,1.2 21.8,3.5 21.1,16.8 15.1,24.4 2.2,21.2" fill="none" stroke="#1b7489" stroke-width="1.1" stroke-linejoin="round"/><path d="M1.3,7.9 L15.9,10.4 L21.8,3.5 M15.9,10.4 L15.1,24.4" stroke="#1b7489" stroke-width="1.1" fill="none" stroke-linejoin="round"/></g>
<g transform="translate(1189.5,5)"><polygon points="1.3,7.9 10.5,1.2 21.8,3.5 21.1,16.8 15.1,24.4 2.2,21.2" fill="#fff"/><path d="M10.5,1.2 L10.5,14.1 M2.2,21.2 L10.5,14.1 L21.1,16.8" stroke="#2a7d92" stroke-width="0.9" stroke-dasharray="1.6,1.3" fill="none"/><polygon points="1.3,7.9 10.5,1.2 10.5,14.1 2.2,21.2" fill="url(#gTeal)"/><polygon points="1.3,7.9 10.5,1.2 21.8,3.5 21.1,16.8 15.1,24.4 2.2,21.2" fill="none" stroke="#1b7489" stroke-width="1.1" stroke-linejoin="round"/><path d="M1.3,7.9 L15.9,10.4 L21.8,3.5 M15.9,10.4 L15.1,24.4" stroke="#1b7489" stroke-width="1.1" fill="none" stroke-linejoin="round"/></g>
<g transform="translate(1237,6)"><g transform="rotate(38 12 12)"><rect x="-1" y="7.6" width="25" height="8.2" rx="0.8" fill="#2a9fbd" stroke="#146b82" stroke-width="0.9"/><rect x="-1" y="13.6" width="25" height="3" fill="#17839f"/><path d="M2,7.8V11M5,7.8V10M8,7.8V11M11,7.8V10M14,7.8V11M17,7.8V10M20,7.8V11" stroke="#0d566a" stroke-width="0.9"/></g><ellipse cx="21" cy="20.2" rx="2" ry="3" fill="#146b82" transform="rotate(38 21 20.2)"/></g>
<path d="M325,17.200000000000003 H333 L329,22.200000000000003 Z" fill="#5f5f5f"/>
<path d="M381,17.200000000000003 H389 L385,22.200000000000003 Z" fill="#c2c2c2"/>
<path d="M921,17.200000000000003 H929 L925,22.200000000000003 Z" fill="#777777"/>
<path d="M623,17 L626,13.6 L629,17 Z M623,21.6 L629,21.6 L626,25 Z" fill="#6e6e6e"/>
<path d="M232.9,55.6 L235.5,52.8 L238.1,55.6 Z M232.9,62 L238.1,62 L235.5,64.8 Z" fill="#6e6e6e"/>
<path d="M297.9,55.6 L300.5,52.8 L303.1,55.6 Z M297.9,62 L303.1,62 L300.5,64.8 Z" fill="#6e6e6e"/>
<g transform="translate(351,46)"><path d="M3.6,18.3 L20.2,4.5" fill="none" stroke="#a6a6a6" stroke-width="3.0" stroke-linecap="round" stroke-linejoin="round"/><path d="M3.6,18.3 L20.2,4.5" fill="none" stroke="#ededed" stroke-width="1.3" stroke-linecap="round" stroke-linejoin="round"/><circle cx="4.3" cy="19.2" r="3.2" fill="#9c9c9c"/><circle cx="3.6" cy="18.3" r="3.2" fill="url(#gBall)" stroke="#b4b4b4" stroke-width="0.5"/><circle cx="20.9" cy="5.4" r="3.2" fill="#9c9c9c"/><circle cx="20.2" cy="4.5" r="3.2" fill="url(#gBall)" stroke="#b4b4b4" stroke-width="0.5"/></g>
<g transform="translate(387,46)"><path d="M3,17.8 L8.3,9.4 L14.5,17 L19.4,4.5" fill="none" stroke="#a6a6a6" stroke-width="2.6" stroke-linecap="round" stroke-linejoin="round"/><path d="M3,17.8 L8.3,9.4 L14.5,17 L19.4,4.5" fill="none" stroke="#ededed" stroke-width="0.9000000000000001" stroke-linecap="round" stroke-linejoin="round"/><circle cx="3.7" cy="18.7" r="2.9" fill="#9c9c9c"/><circle cx="3" cy="17.8" r="2.9" fill="url(#gBall)" stroke="#b4b4b4" stroke-width="0.5"/><circle cx="9.0" cy="10.3" r="2.9" fill="#9c9c9c"/><circle cx="8.3" cy="9.4" r="2.9" fill="url(#gBall)" stroke="#b4b4b4" stroke-width="0.5"/><circle cx="15.2" cy="17.9" r="2.9" fill="#9c9c9c"/><circle cx="14.5" cy="17" r="2.9" fill="url(#gBall)" stroke="#b4b4b4" stroke-width="0.5"/><circle cx="20.099999999999998" cy="5.4" r="2.9" fill="#9c9c9c"/><circle cx="19.4" cy="4.5" r="2.9" fill="url(#gBall)" stroke="#b4b4b4" stroke-width="0.5"/></g>
<g transform="translate(423,46)"><circle cx="10.5" cy="11.2" r="9.3" fill="none" stroke="#a6a6a6" stroke-width="3"/><circle cx="10.5" cy="11.2" r="9.3" fill="none" stroke="#f0f0f0" stroke-width="1.4"/><circle cx="11.2" cy="12.1" r="2.9" fill="#9c9c9c"/><circle cx="10.5" cy="11.2" r="2.9" fill="url(#gBall)" stroke="#b4b4b4" stroke-width="0.5"/><circle cx="20.5" cy="12.5" r="2.9" fill="#9c9c9c"/><circle cx="19.8" cy="11.6" r="2.9" fill="url(#gBall)" stroke="#b4b4b4" stroke-width="0.5"/></g>
<g transform="translate(459,46)"><path d="M3.7,4.5 C12,4.5 18.5,9 19.4,18.3" fill="none" stroke="#a6a6a6" stroke-width="2.8" stroke-linecap="round" stroke-linejoin="round"/><path d="M3.7,4.5 C12,4.5 18.5,9 19.4,18.3" fill="none" stroke="#ededed" stroke-width="1.0999999999999999" stroke-linecap="round" stroke-linejoin="round"/><circle cx="4.4" cy="5.4" r="3" fill="#9c9c9c"/><circle cx="3.7" cy="4.5" r="3" fill="url(#gBall)" stroke="#b4b4b4" stroke-width="0.5"/><circle cx="4.7" cy="19.2" r="3" fill="#9c9c9c"/><circle cx="4" cy="18.3" r="3" fill="url(#gBall)" stroke="#b4b4b4" stroke-width="0.5"/><circle cx="20.099999999999998" cy="19.2" r="3" fill="#9c9c9c"/><circle cx="19.4" cy="18.3" r="3" fill="url(#gBall)" stroke="#b4b4b4" stroke-width="0.5"/></g>
<g transform="translate(495,46)"><g transform="rotate(-8 11.8 12.4)"><ellipse cx="11.8" cy="12.4" rx="10.4" ry="5.4" fill="none" stroke="#a6a6a6" stroke-width="2.8"/><ellipse cx="11.8" cy="12.4" rx="10.4" ry="5.4" fill="none" stroke="#f0f0f0" stroke-width="1.2"/></g><circle cx="21.7" cy="6.4" r="2.6" fill="#9c9c9c"/><circle cx="21" cy="5.5" r="2.6" fill="url(#gBall)" stroke="#b4b4b4" stroke-width="0.5"/><circle cx="3.3" cy="19.2" r="2.6" fill="#9c9c9c"/><circle cx="2.6" cy="18.3" r="2.6" fill="url(#gBall)" stroke="#b4b4b4" stroke-width="0.5"/></g>
<g transform="translate(531,46)"><path d="M2.8,4.8 L14.4,1.7 L19.5,11.8 L13.6,21.4 L2.8,17 Z" fill="none" stroke="#a6a6a6" stroke-width="2.8" stroke-linecap="round" stroke-linejoin="round"/><path d="M2.8,4.8 L14.4,1.7 L19.5,11.8 L13.6,21.4 L2.8,17 Z" fill="none" stroke="#ededed" stroke-width="1.0999999999999999" stroke-linecap="round" stroke-linejoin="round"/><circle cx="11.2" cy="12.1" r="3" fill="#9c9c9c"/><circle cx="10.5" cy="11.2" r="3" fill="url(#gBall)" stroke="#b4b4b4" stroke-width="0.5"/><circle cx="20.0" cy="12.700000000000001" r="3" fill="#9c9c9c"/><circle cx="19.3" cy="11.8" r="3" fill="url(#gBall)" stroke="#b4b4b4" stroke-width="0.5"/></g>
<g transform="translate(567,46)"><path d="M3.7,4.5 H19.9 V18.3 H3.7 Z" fill="none" stroke="#a6a6a6" stroke-width="2.8" stroke-linecap="round" stroke-linejoin="round"/><path d="M3.7,4.5 H19.9 V18.3 H3.7 Z" fill="none" stroke="#ededed" stroke-width="1.0999999999999999" stroke-linecap="round" stroke-linejoin="round"/><circle cx="20.599999999999998" cy="5.4" r="3" fill="#9c9c9c"/><circle cx="19.9" cy="4.5" r="3" fill="url(#gBall)" stroke="#b4b4b4" stroke-width="0.5"/><circle cx="4.4" cy="19.2" r="3" fill="#9c9c9c"/><circle cx="3.7" cy="18.3" r="3" fill="url(#gBall)" stroke="#b4b4b4" stroke-width="0.5"/></g>
<g transform="translate(603,46)"><text x="0.4" y="21" font-family="Liberation Serif, serif" font-weight="bold" font-style="italic" font-size="26.5" fill="#8e8e8e">A</text><text x="-0.3" y="20.4" font-family="Liberation Serif, serif" font-weight="bold" font-style="italic" font-size="26.5" fill="#d6d6d6" stroke="#909090" stroke-width="0.7">A</text></g>
<g transform="translate(639,46)"><path d="M3.7,19 V10.4 M19.4,19 V10.4 M3.7,10.4 H19.4" fill="none" stroke="#8a8a8a" stroke-width="1.5"/><circle cx="3.7" cy="10.4" r="1.3" fill="#555"/><circle cx="19.4" cy="10.4" r="1.3" fill="#555"/><text x="11.5" y="7" font-family="Liberation Sans, sans-serif" font-weight="bold" font-size="7" fill="#fbfbfb" stroke="#d5d5d5" stroke-width="0.4" text-anchor="middle">1.00</text><circle cx="12.1" cy="11.5" r="2.3" fill="#9c9c9c"/><circle cx="11.4" cy="10.6" r="2.3" fill="url(#gBall)" stroke="#b4b4b4" stroke-width="0.5"/><circle cx="4.4" cy="20.299999999999997" r="3" fill="#9c9c9c"/><circle cx="3.7" cy="19.4" r="3" fill="url(#gBall)" stroke="#b4b4b4" stroke-width="0.5"/><circle cx="20.099999999999998" cy="20.299999999999997" r="3" fill="#9c9c9c"/><circle cx="19.4" cy="19.4" r="3" fill="url(#gBall)" stroke="#b4b4b4" stroke-width="0.5"/></g>
<g transform="translate(675,46)"><path d="M4.1,15.5 C4.5,3 18,3 18.7,17" fill="none" stroke="#a6a6a6" stroke-width="2.8" stroke-linecap="round" stroke-linejoin="round"/><path d="M4.1,15.5 C4.5,3 18,3 18.7,17" fill="none" stroke="#ededed" stroke-width="1.0999999999999999" stroke-linecap="round" stroke-linejoin="round"/><circle cx="4.8" cy="16.4" r="3" fill="#9c9c9c"/><circle cx="4.1" cy="15.5" r="3" fill="url(#gBall)" stroke="#b4b4b4" stroke-width="0.5"/><circle cx="12.299999999999999" cy="6.6000000000000005" r="3" fill="#9c9c9c"/><circle cx="11.6" cy="5.7" r="3" fill="url(#gBall)" stroke="#b4b4b4" stroke-width="0.5"/><circle cx="19.4" cy="17.9" r="3" fill="#9c9c9c"/><circle cx="18.7" cy="17" r="3" fill="url(#gBall)" stroke="#b4b4b4" stroke-width="0.5"/></g>
<g transform="translate(710,46)"><circle cx="12.3" cy="12" r="4.5" fill="url(#gBall)" stroke="#a2a2a2" stroke-width="0.9"/></g>
<g transform="translate(746.5,46)"><text x="1.5" y="21.3" font-family="Liberation Sans, sans-serif" font-weight="normal" font-style="italic" font-size="26" fill="#8e8e8e" transform="scale(1.18,0.9)">S</text><text x="0.9" y="20.7" font-family="Liberation Sans, sans-serif" font-weight="normal" font-style="italic" font-size="26" fill="#c2c2c2" stroke="#9a9a9a" stroke-width="0.9" transform="scale(1.18,0.9)">S</text></g>
<g transform="translate(783,46)"><path d="M1.8,8.6 L11.5,2.6 L11.5,17.6 L1.8,22.6 Z" fill="#c9c9c9" stroke="#9d9d9d" stroke-width="0.8"/><path d="M11.5,2.6 L24,1 L24,5.2 L16.5,6.6 L16.5,9.6 L23,8.4 L23,12.4 L16.5,13.8 L16.5,19.6 L11.5,22.8 L1.8,22.6 L11.5,17.6 Z" fill="#b5b5b5" stroke="#9d9d9d" stroke-width="0.8"/><path d="M11.5,17.6 L11.5,22.8" stroke="#9d9d9d" stroke-width="0.8"/></g>
<g transform="translate(818,46)"><path d="M5.3,17.4 L7.3,2.5 M20.7,17.4 L19.3,2.5" stroke="#a9a9a9" stroke-width="1"/><path d="M5.3,17.4 C6.5,3 19.5,3 20.7,17.4" fill="none" stroke="#a6a6a6" stroke-width="2.8" stroke-linecap="round" stroke-linejoin="round"/><path d="M5.3,17.4 C6.5,3 19.5,3 20.7,17.4" fill="none" stroke="#ededed" stroke-width="1.0999999999999999" stroke-linecap="round" stroke-linejoin="round"/><rect x="5.8" y="1" width="3" height="3" fill="#d9d9d9" stroke="#999" stroke-width="0.7"/><rect x="17.8" y="1" width="3" height="3" fill="#d9d9d9" stroke="#999" stroke-width="0.7"/><circle cx="6.0" cy="18.299999999999997" r="3.2" fill="#9c9c9c"/><circle cx="5.3" cy="17.4" r="3.2" fill="url(#gBall)" stroke="#b4b4b4" stroke-width="0.5"/><circle cx="21.4" cy="18.299999999999997" r="3.2" fill="#9c9c9c"/><circle cx="20.7" cy="17.4" r="3.2" fill="url(#gBall)" stroke="#b4b4b4" stroke-width="0.5"/></g>
<g transform="translate(868,46)"><path d="M12,1.4 L16.4,6.6 H13.6 V10.4 H17.4 V7.6 L22.6,12 L17.4,16.4 V13.6 H13.6 V17.4 H16.4 L12,22.6 L7.6,17.4 H10.4 V13.6 H6.6 V16.4 L1.4,12 L6.6,7.6 V10.4 H10.4 V6.6 H7.6 Z" fill="#a2a2a2" stroke="#8f8f8f" stroke-width="0.6" stroke-linejoin="round"/></g>
<g transform="translate(903.7,46)"><path d="M8.6,6.6 C3.4,8.6 1.2,14 3.6,18.4 C6,22.8 11.8,24.2 16.2,21.6 C20.6,19 22,13.6 19.6,9.4 L16.4,11.2 C17.8,13.8 17,17 14.4,18.6 C11.6,20.2 8.2,19.2 6.8,16.6 C5.4,14 6.4,10.8 9.4,9.6 L10.2,12.6 L14.6,5.4 L7.6,1.4 Z" fill="#a2a2a2" stroke="#8f8f8f" stroke-width="0.6" stroke-linejoin="round"/></g>
<g transform="translate(940,46)"><path d="M1.6,5.6 L5.2,1.6 H20.6 V13 C20.6,18.6 16.8,22.4 11.4,22.8 L10.8,20 C15,19.4 17.4,16.8 17.4,13 V4.6 H5.6 Z" fill="#a2a2a2" stroke="#8f8f8f" stroke-width="0.6" stroke-linejoin="round"/><path d="M6,10.4 C8,7.4 13.6,7.2 14.6,11 C15.4,14.2 13.6,17 10.4,17.6 L9.6,15 C11.6,14.4 12.4,13 12,11.6 C11.4,10 9,10.4 8.2,12.2 Z" fill="#a2a2a2" stroke="#8f8f8f" stroke-width="0.6" stroke-linejoin="round"/></g>
<g transform="translate(976,46)"><path d="M1.2,12 L7.4,6.6 V10.4 H10.6 V3.4 H13.4 V10.4 H16.6 V6.6 L22.8,12 L16.6,17.4 V13.6 H13.4 V20.6 H10.6 V13.6 H7.4 V17.4 Z" fill="#a2a2a2" stroke="#8f8f8f" stroke-width="0.6" stroke-linejoin="round"/></g>
<g transform="translate(1012,46)"><path d="M12,1.6 L22.2,13 H16.6 V22.4 H7.4 V13 H1.8 Z" fill="#a2a2a2" stroke="#8f8f8f" stroke-width="0.6" stroke-linejoin="round"/><path d="M16.6,22.4 L17.8,21.4 V13.4 M7.4,22.4" stroke="#8a8a8a" stroke-width="0.8" fill="none"/></g>
<g transform="translate(1048,46)"><path d="M12,22.4 L22.2,11 H16.6 V1.6 H7.4 V11 H1.8 Z" fill="#a2a2a2" stroke="#8f8f8f" stroke-width="0.6" stroke-linejoin="round"/><path d="M22.2,11 L23,12 L13,23" stroke="#8a8a8a" stroke-width="0.9" fill="none"/></g>
<g transform="translate(1083.7,46)"><path d="M2.6,12 V2.6 H21.4 V21.4 H13" fill="none" stroke="#9c9c9c" stroke-width="2" stroke-dasharray="3.2,2.2"/><rect x="2" y="12.6" width="9.4" height="9.4" fill="#ededed" stroke="#9a9a9a" stroke-width="2.2"/><path d="M11.6,9.6 L16.2,5 L14.6,3.4 L20.6,3.4 L20.6,9.4 L19,7.8 L14.4,12.4 Z" fill="#a2a2a2" stroke="#8f8f8f" stroke-width="0.6" stroke-linejoin="round"/></g>
<g transform="translate(1119.4,46)"><path d="M12.6,1.6 L22.4,19.4 L8.6,22.6 Z" fill="#8e8e8e" stroke="#7e7e7e" stroke-width="0.6"/><path d="M1.4,4.6 L8,1.2 L16,15.4 L13.4,19.6 L8.6,18.6 Z" fill="#a9a9a9" stroke="#6f6f6f" stroke-width="0.7"/><path d="M3.4,3.6 L11,17.6 M5.6,2.4 L13.4,16.4" stroke="#7a7a7a" stroke-width="0.7"/><path d="M8.6,18.6 L13.4,19.6 L16,15.4 L12,14.2 Z" fill="#f1f1f1" stroke="#8a8a8a" stroke-width="0.5"/></g>
<g transform="translate(1156,46)"><path d="M2.4,8.6 L7.6,2.4 L12.4,8.4 L21.4,2.8" fill="none" stroke="#a6a6a6" stroke-width="3.0" stroke-linecap="round" stroke-linejoin="round"/><path d="M2.4,8.6 L7.6,2.4 L12.4,8.4 L21.4,2.8" fill="none" stroke="#ededed" stroke-width="1.3" stroke-linecap="round" stroke-linejoin="round"/><path d="M2.4,20 C5.6,14.6 9.4,14.6 12,17.6 C14.8,20.8 18.6,20.4 21.6,15.6" fill="none" stroke="#a6a6a6" stroke-width="3.0" stroke-linecap="round" stroke-linejoin="round"/><path d="M2.4,20 C5.6,14.6 9.4,14.6 12,17.6 C14.8,20.8 18.6,20.4 21.6,15.6" fill="none" stroke="#ededed" stroke-width="1.3" stroke-linecap="round" stroke-linejoin="round"/><path d="M8,9.8 H17 L12.4,15.6 Z" fill="#a2a2a2" stroke="#8f8f8f" stroke-width="0.6" stroke-linejoin="round"/></g>
<g transform="translate(1192.2,46)"><path d="M1.2,18.4 H22.6" stroke="#a6a6a6" stroke-width="3.2"/><path d="M1.4,18 H22.4" stroke="#dedede" stroke-width="1.2"/><circle cx="12.5" cy="18.5" r="3.1" fill="#9c9c9c"/><circle cx="11.8" cy="17.6" r="3.1" fill="url(#gBall)" stroke="#b4b4b4" stroke-width="0.5"/><path d="M11.8,2.2 V12 M6.9,7.1 H16.7" stroke="#8c8c8c" stroke-width="3.4"/></g>
<g transform="translate(1228,46)"><path d="M1.2,16.6 H22.6" stroke="#a6a6a6" stroke-width="3.2"/><path d="M1.4,16.2 H22.4" stroke="#dedede" stroke-width="1.2"/><circle cx="12.5" cy="16.7" r="3.1" fill="#9c9c9c"/><circle cx="11.8" cy="15.8" r="3.1" fill="url(#gBall)" stroke="#b4b4b4" stroke-width="0.5"/><path d="M7,5.2 H16.8" stroke="#8c8c8c" stroke-width="3.4"/></g>
<g transform="translate(1272,90)"><path d="M8.6,10.4 V8.4 C8.6,3.8 15.6,3.8 15.6,8.4 V10.4" fill="none" stroke="#0a4d3c" stroke-width="3.4"/><path d="M8.6,10.4 V8.4 C8.6,3.8 15.6,3.8 15.6,8.4 V10.4" fill="none" stroke="#6fd0b4" stroke-width="1.6"/><rect x="7" y="10" width="10.3" height="9" rx="0.8" fill="#14a57e" stroke="#0a4d3c" stroke-width="0.9"/><path d="M7.6,12.4H16.8M7.6,14.6H16.8M7.6,16.8H16.8" stroke="#0f8563" stroke-width="0.8"/><path d="M7.8,10.8 H11 V18.4 H7.8Z" fill="#fff" opacity="0.25"/></g>
<g transform="translate(1272,116)"><path d="M4.9,17.4 L19,6.3" fill="none" stroke="#0a4d3c" stroke-width="3.8" stroke-linecap="butt" stroke-linejoin="miter"/><path d="M4.9,17.4 L19,6.3" fill="none" stroke="#14a57e" stroke-width="2.2" stroke-linecap="butt" stroke-linejoin="miter"/><path d="M8.2,13.2 L11.2,9 L15,8.6 L16,11 L13,15.2 L9.2,15.6 Z" fill="#14a57e" stroke="#0a4d3c" stroke-width="0.9" stroke-linejoin="round"/></g>
<g transform="translate(1272,142)"><path d="M10.7,5.4 H13.4 V15.8 H19.6 V18.8 H4.8 V15.8 H10.7 Z" fill="#14a57e" stroke="#0a4d3c" stroke-width="0.9"/></g>
<g transform="translate(1272,168)"><path d="M8.2,4.8V19.4M15.8,4.8V19.4M4.8,8.2H19.4M4.8,15.8H19.4" stroke="#0a4d3c" stroke-width="4.2" stroke-linecap="round"/><path d="M8.2,4.8V19.4M15.8,4.8V19.4M4.8,8.2H19.4M4.8,15.8H19.4" stroke="#14a57e" stroke-width="2.6" stroke-linecap="round"/></g>
<g transform="translate(1272,194)"><path d="M7,6.6 L17.4,17.4 M17.4,6.6 L7,17.4" stroke="#0a4d3c" stroke-width="4.4" stroke-linecap="butt"/><path d="M7.5,7.1 L16.9,16.9 M16.9,7.1 L7.5,16.9" stroke="#14a57e" stroke-width="2.8" stroke-linecap="butt"/></g>
<g transform="translate(1272,220)"><path d="M6.9,6.8 L19.2,11.9" fill="none" stroke="#0a4d3c" stroke-width="3.8" stroke-linecap="butt" stroke-linejoin="miter"/><path d="M6.9,6.8 L19.2,11.9" fill="none" stroke="#14a57e" stroke-width="2.2" stroke-linecap="butt" stroke-linejoin="miter"/><path d="M5,10.9 L17.3,17.2" fill="none" stroke="#0a4d3c" stroke-width="3.8" stroke-linecap="butt" stroke-linejoin="miter"/><path d="M5,10.9 L17.3,17.2" fill="none" stroke="#14a57e" stroke-width="2.2" stroke-linecap="butt" stroke-linejoin="miter"/></g>
<g transform="translate(1272,246)"><path d="M8.4,15.2 L18.2,7.2" fill="none" stroke="#0a4d3c" stroke-width="3.5999999999999996" stroke-linecap="round" stroke-linejoin="miter"/><path d="M8.4,15.2 L18.2,7.2" fill="none" stroke="#14a57e" stroke-width="2.0" stroke-linecap="round" stroke-linejoin="miter"/><circle cx="7.9" cy="15.7" r="2.9" fill="#14a57e" stroke="#0a4d3c" stroke-width="0.9"/></g>
<g transform="translate(1272,272)"><circle cx="11.6" cy="11.4" r="5.6" fill="none" stroke="#0a4d3c" stroke-width="2.6"/><circle cx="11.6" cy="11.4" r="5.6" fill="none" stroke="#14a57e" stroke-width="1.2"/><circle cx="11.6" cy="5.6" r="2.5" fill="#14a57e" stroke="#0a4d3c" stroke-width="0.9"/><circle cx="17.4" cy="11.4" r="2.5" fill="#14a57e" stroke="#0a4d3c" stroke-width="0.9"/><circle cx="11.6" cy="17.2" r="2.5" fill="#14a57e" stroke="#0a4d3c" stroke-width="0.9"/><circle cx="5.8" cy="11.4" r="2.5" fill="#14a57e" stroke="#0a4d3c" stroke-width="0.9"/></g>
<g transform="translate(1272,298)"><circle cx="11.6" cy="11.2" r="6.6" fill="none" stroke="#0a4d3c" stroke-width="3.4"/><circle cx="11.6" cy="11.2" r="6.6" fill="none" stroke="#14a57e" stroke-width="1.9"/><circle cx="11.6" cy="11.2" r="2.8" fill="#14a57e" stroke="#0a4d3c" stroke-width="0.9"/></g>
<g transform="translate(1272,324)"><circle cx="6.2" cy="12" r="2.3" fill="#14a57e" stroke="#0a4d3c" stroke-width="0.9"/><circle cx="11.8" cy="12" r="2.3" fill="#14a57e" stroke="#0a4d3c" stroke-width="0.9"/><circle cx="17.4" cy="12" r="2.3" fill="#14a57e" stroke="#0a4d3c" stroke-width="0.9"/></g>
<g transform="translate(1272,350)"><path d="M6,10.6 L16.4,17.2" fill="none" stroke="#0a4d3c" stroke-width="3.8" stroke-linecap="butt" stroke-linejoin="miter"/><path d="M6,10.6 L16.4,17.2" fill="none" stroke="#14a57e" stroke-width="2.2" stroke-linecap="butt" stroke-linejoin="miter"/><circle cx="15.6" cy="7.6" r="2.1" fill="#14a57e" stroke="#0a4d3c" stroke-width="0.9"/></g>
<g transform="translate(1272,376)"><path d="M10.4,6 H13.6 V9.9 H17.6 V13.1 H13.6 V17 H10.4 V13.1 H6.4 V9.9 H10.4 Z" fill="#14a57e" stroke="#0a4d3c" stroke-width="0.9"/></g>
<g transform="translate(1272,402)"><path d="M8.2,19 V9.6 H17.8 V12.4" fill="none" stroke="#0a4d3c" stroke-width="1.5"/><path d="M6,17.6H10.4 M8.2,9.6 H6" stroke="#0a4d3c" stroke-width="1"/><text x="13.4" y="7.6" font-family="Liberation Sans, sans-serif" font-weight="bold" font-size="5.2" fill="#0a4d3c" text-anchor="middle">1.00</text><text transform="translate(6.4,14.2) rotate(-90)" font-family="Liberation Sans, sans-serif" font-weight="bold" font-size="5.2" fill="#0a4d3c" text-anchor="middle">1.00</text></g>
<g transform="translate(1272,428)"><rect x="5.6" y="5.2" width="13.6" height="12.8" rx="0.6" fill="#14a57e" stroke="#0a4d3c" stroke-width="0.9"/><circle cx="9.8" cy="13.7" r="1.5" fill="none" stroke="#0a4d3c" stroke-width="0.9"/></g>
<g transform="translate(459.6,8.6)"><path d="M7.2,1 L14.6,12.6 H7.2 Z" fill="#f1dd3c" stroke="#9a8514" stroke-width="0.8"/><path d="M9,6 V10.8 H12 Z" fill="#fbf6c8"/><path d="M1,11.2 H4 V9.2 H6.6 V16.4 H1 Z" fill="#e08a1e" stroke="#9c5a0c" stroke-width="0.7"/><path d="M4,12.4 H16.4 V14.8 H4 Z" fill="#e9961f" stroke="#9c5a0c" stroke-width="0.7"/><path d="M7,16.6 H16.6" stroke="#8c8c8c" stroke-width="0.6"/></g>
<g transform="translate(13.6,49.6)"><path d="M0.6,3.4 L10.8,0.8 L13.2,12.6 L2.6,15.6 Z" fill="#3fc0cf" stroke="#137f8e" stroke-width="0.9"/><path d="M3.4,5.4 L9.6,3.8 L10.6,10.6 L4.6,12.4 Z" fill="#f2f1f0" stroke="#111" stroke-width="1.5"/><path d="M11.6,0.4 L13.4,15.8 M0.2,12.6 L1.4,16.4" stroke="#137f8e" stroke-width="0.9"/></g>
<g transform="translate(131.6,49.6)"><path d="M1,10.2 L8.2,5.4 L7.4,3.6 L15.6,3.2 L12.4,10.6 L11,8.8 L3.6,13.2 Z" fill="#c4efe8" stroke="#2d6a62" stroke-width="0.9" stroke-linejoin="round"/><path d="M1,10.2 L7.6,5.8 L10.4,9.2 L3.6,13.2 Z" fill="#16a394" stroke="#0f5f58" stroke-width="0.9" stroke-linejoin="round"/></g>
<g transform="translate(313.4,49.6)"><rect x="0.8" y="0.8" width="5.4" height="4.4" fill="#e02020"/><rect x="0.8" y="5.2" width="5.4" height="3.6" fill="#f0d21a"/><rect x="0.8" y="8.8" width="5.4" height="3.8" fill="#2a5fd0"/><rect x="0.8" y="12.6" width="5.4" height="3.6" fill="#25b025"/><rect x="0.8" y="0.8" width="5.4" height="15.4" fill="none" stroke="#555" stroke-width="0.7"/><path d="M3.2,6.6 H9 V3.6 L15.4,8.8 L9,14 V11 H3.2 Z" fill="#2f7be0" stroke="#143f8c" stroke-width="0.8" stroke-linejoin="round"/></g>
<g transform="translate(13.6,199)"><rect x="0.8" y="8.6" width="13" height="11" fill="none" stroke="#1313d6" stroke-width="1.6"/><circle cx="12.8" cy="7.2" r="6.8" fill="none" stroke="#1313d6" stroke-width="1.5"/></g>
<g transform="translate(229.6,201.8)"><circle cx="7.2" cy="7.2" r="7.1" fill="#f6f2ee"/><path d="M4,6.6 L7.2,3.6 L10.4,6.6 M4,10.8 L7.2,7.8 L10.4,10.8" fill="none" stroke="#e8673a" stroke-width="1.2"/></g>
<g transform="translate(21.4,266.6)"><g transform="translate(0.6,1.2) scale(0.9)"><path d="M12.4,0.8 L3.8,2.6 L6.2,5 L0.8,11.2 L1,16.2 L4.4,14.4 L9,8 L11.2,10.2 Z" fill="#fff" stroke="#050505" stroke-width="1.7" stroke-linejoin="round"/><path d="M1.2,11.4 L1.2,16 L5.4,13.6" fill="#050505"/></g></g>
<g transform="translate(272.4,687)"><path d="M0.6,0.6 H8.6 V3.6 H4.4 V6 H7.6 V9 H4.4 V13.4 H0.6 Z" fill="#e8341c"/><path d="M0.6,0.6 H2.6 V13.4 H0.6 Z" fill="#f37a2a"/><g transform="translate(9.2,9.2)"><path d="M-1.1,-5.6 H1.1 L1.5,-3.9 L3,-3.2 L4.5,-4.1 L5.9,-2.5 L4.9,-1.1 L5.3,0.4 L6.9,1 L6.6,3.1 L4.9,3.3 L4,4.6 L4.6,6.2 L2.7,7.2 L1.5,5.9 L-0.1,6 L-1.1,7.4 L-3.1,6.6 L-2.9,4.9 L-4,3.8 L-5.7,4 L-6.4,2 L-5,1 L-4.9,-0.6 L-6.2,-1.7 L-5.2,-3.6 L-3.5,-3.2 L-2.2,-4.1 Z" fill="#1b3f9c" transform="scale(0.76)"/><circle cx="0" cy="0.6" r="1.7" fill="#fbfbfb"/></g></g>
<g transform="translate(420.4,687.4)"><path d="M0.6,0.6 H8.6 V3.6 H4.4 V6 H7.6 V9 H4.4 V13.4 H0.6 Z" fill="#e8341c"/><path d="M0.6,0.6 H2.6 V13.4 H0.6 Z" fill="#f37a2a"/><g transform="translate(9.2,9.2)"><path d="M-1.1,-5.6 H1.1 L1.5,-3.9 L3,-3.2 L4.5,-4.1 L5.9,-2.5 L4.9,-1.1 L5.3,0.4 L6.9,1 L6.6,3.1 L4.9,3.3 L4,4.6 L4.6,6.2 L2.7,7.2 L1.5,5.9 L-0.1,6 L-1.1,7.4 L-3.1,6.6 L-2.9,4.9 L-4,3.8 L-5.7,4 L-6.4,2 L-5,1 L-4.9,-0.6 L-6.2,-1.7 L-5.2,-3.6 L-3.5,-3.2 L-2.2,-4.1 Z" fill="#1b3f9c" transform="scale(0.76)"/><circle cx="0" cy="0.6" r="1.7" fill="#fbfbfb"/></g></g>
<g transform="translate(389,688.6)"><path d="M1.2,1.2 L11.2,10.8 M11.2,1.2 L1.2,10.8" stroke="#4d4d4d" stroke-width="3.2" stroke-linecap="butt"/></g>
<g transform="translate(604,689)"><path d="M1.2,1.2 L11.2,10.8 M11.2,1.2 L1.2,10.8" stroke="#4d4d4d" stroke-width="3.2" stroke-linecap="butt"/></g>
</svg>
</body></html>
